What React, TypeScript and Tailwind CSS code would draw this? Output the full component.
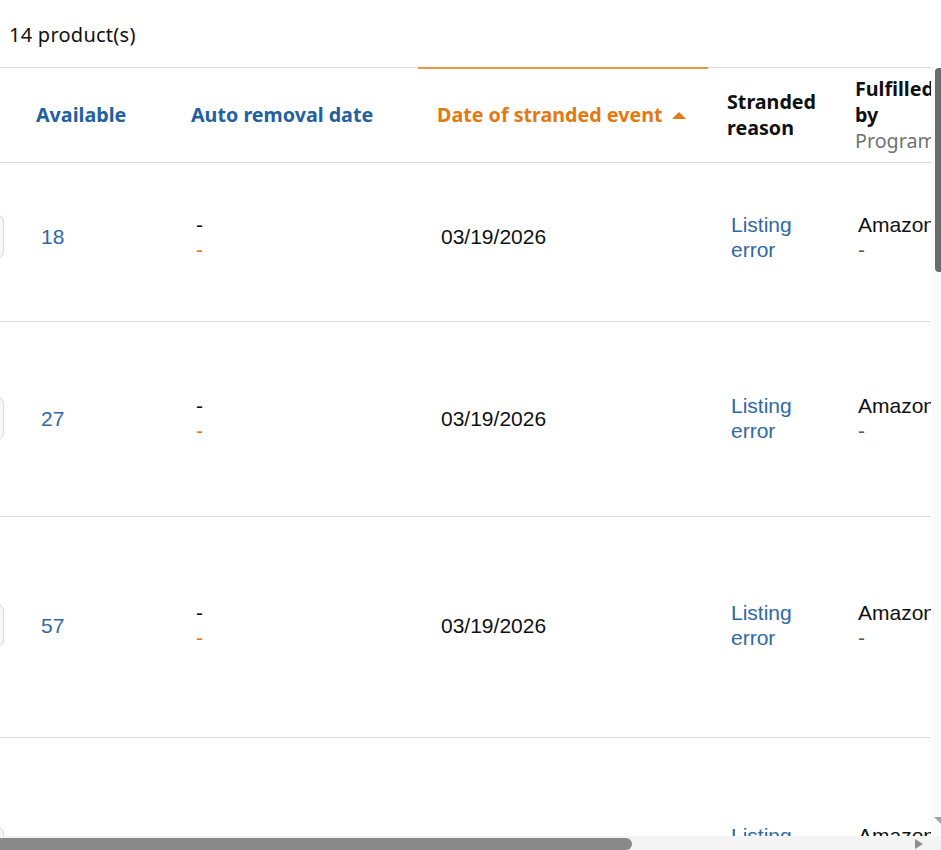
const columns = 'grid grid-cols-[17px_155px_246px_290px_128px_1fr]';

type Row = { id: string; available: number; date: string; height: string };

const rows: Row[] = [
  { id: 'row-1', available: 18, date: '03/19/2026', height: 'h-[147px] pb-[11px]' },
  { id: 'row-2', available: 27, date: '03/19/2026', height: 'h-[192px] pb-[2px]' },
  { id: 'row-3', available: 57, date: '03/19/2026', height: 'h-[216px] pb-[4px]' },
  { id: 'row-4', available: 12, date: '03/19/2026', height: 'h-[220px]' }
];

export default function App() {
  return (
    <div className="relative h-[850px] w-[941px] overflow-hidden bg-white font-['Liberation_Sans',Arial,sans-serif] text-[#0f1111]">
      <div className="h-[67px] pl-[9px] pt-[21px] font-['Noto_Sans',sans-serif] text-[20px] leading-[28px] tracking-[0.25px]">
        14 product(s)
      </div>

      <div className="border-t border-[#dcdcdc]">
        {/* header */}
        <div className={`${columns} h-[95px] border-b border-[#dcdcdc] font-['Noto_Sans',sans-serif] text-[19.7px] font-bold leading-[26px]`}>
          <div />
          <div className="flex items-center pl-[19px] text-[#22609f]">Available</div>
          <div className="flex items-center pl-[19px] text-[#22609f]">Auto removal date</div>
          <div className="relative flex items-center pl-[19px] text-[#e47911]">
            <div className="absolute -top-px left-0 right-0 h-[2px] bg-[#e8953f]" />
            <span>Date of stranded event</span>
            <svg width="14" height="7" viewBox="0 0 14 7" className="ml-[9px]">
              <path d="M0 7 L7 0 L14 7 Z" fill="#e47911" />
            </svg>
          </div>
          <div className="flex items-center pl-[19px]">
            Stranded
            <br />
            reason
          </div>
          <div className="flex flex-col justify-center whitespace-nowrap pl-[19px]">
            <span>Fulfilled</span>
            <span>by</span>
            <span className="font-normal text-[#6f7373]">Program</span>
          </div>
        </div>

        {/* rows */}
        {rows.map((row) => (
          <div
            key={row.id}
            className={`${columns} ${row.height} box-content border-b border-[#dcdcdc] text-[21px] leading-[25px]`}
          >
            <div className="flex items-center">
              <div className="ml-[-36px] h-[45px] w-[40px] rounded-[8px] border border-[#d5d9d9] bg-[#f7f7f7]" />
            </div>
            <div className="flex items-center pl-[24px] text-[#2f69a6]">{row.available}</div>
            <div className="flex flex-col justify-center pl-[24px]">
              <span>-</span>
              <span className="text-[#e47911]">-</span>
            </div>
            <div className="flex items-center pl-[23px]">{row.date}</div>
            <div className="flex flex-col justify-center pl-[23px] text-[#2f69a6]">
              <span>Listing</span>
              <span>error</span>
            </div>
            <div className="flex flex-col justify-center whitespace-nowrap pl-[22px]">
              <span>Amazon</span>
              <span className="text-[#565959]">-</span>
            </div>
          </div>
        ))}
      </div>

      {/* vertical scrollbar */}
      <div className="absolute bottom-[14px] right-0 top-[67px] w-[10px] bg-[#fafafa]">
        <div className="absolute right-0 top-px h-[204px] w-[6px] rounded-l-[4px] bg-[#6b6b6b]" />
        <svg width="7" height="7" viewBox="0 0 7 7" className="absolute bottom-[12px] right-0">
          <path d="M0 0 L7 0 L7 7 Z" fill="#a3a3a3" />
        </svg>
      </div>

      {/* horizontal scrollbar */}
      <div className="absolute bottom-0 left-0 right-0 h-[14px] bg-[#f4f4f4]">
        <div className="absolute bottom-0 left-0 h-[12px] w-[632px] rounded-r-[6px] bg-[#8a8a8a]" />
        <svg width="8" height="10" viewBox="0 0 8 10" className="absolute bottom-px right-[18px]">
          <path d="M0 0 L8 5 L0 10 Z" fill="#8f8f8f" />
        </svg>
      </div>
    </div>
  );
}
